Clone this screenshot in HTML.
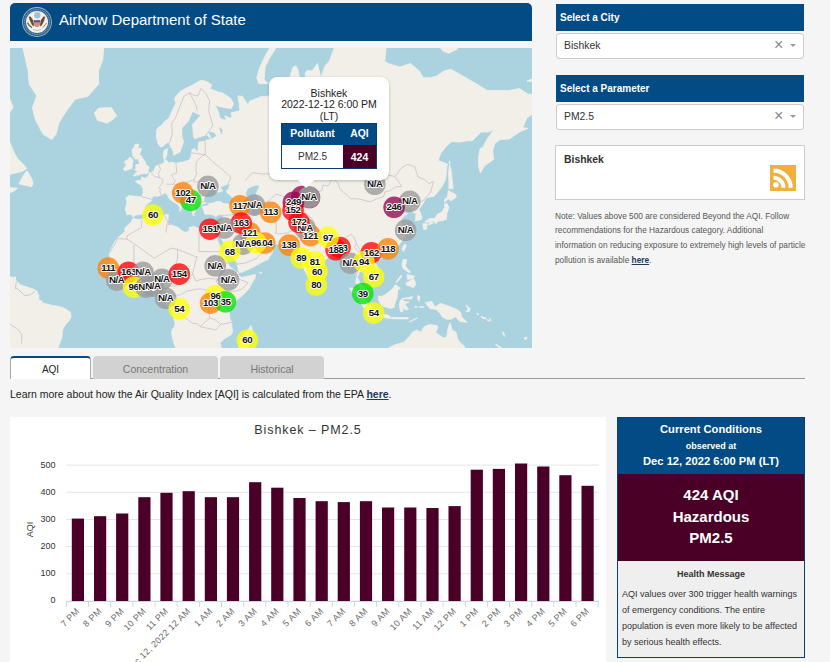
<!DOCTYPE html>
<html><head><meta charset="utf-8"><style>
*{box-sizing:border-box;margin:0;padding:0}
html,body{width:830px;height:662px;overflow:hidden;background:#f5f5f5;font-family:"Liberation Sans",sans-serif;color:#333}
.a{position:absolute}
.hdr{left:10px;top:3px;width:522px;height:38px;background:#034b85;border-radius:5px 5px 0 0}
.title{left:59px;top:10px;font-size:15px;color:#fff;line-height:19px;white-space:nowrap}
.sh{left:556px;width:248px;height:27px;background:#034b85;color:#fff;font-weight:700;font-size:10px;padding-left:4px;line-height:27px;white-space:nowrap}
.sel{left:556px;width:248px;height:26px;background:#fff;border:1px solid #ccc;border-radius:3px;font-size:10.4px;color:#333;padding-left:7px;line-height:24px}
.x{position:absolute;left:217px;top:-1px;font-size:16px;color:#888;line-height:23px}
.car{position:absolute;left:233px;top:10px;width:0;height:0;border-left:3.5px solid transparent;border-right:3.5px solid transparent;border-top:3.5px solid #999}
.box{left:555px;top:145px;width:250px;height:55px;background:#fff;border:1px solid #ccc}
.note{left:555px;top:208.7px;width:275px;white-space:nowrap;font-size:8.3px;color:#555;line-height:14.8px}
.note a,.learn a{color:#1a3b5d;font-weight:700;text-decoration:underline}
.tab{top:356px;height:23px;font-size:10.5px;text-align:center;line-height:26px;border-radius:4px 4px 0 0}
.learn{left:10px;top:387px;font-size:10.5px;color:#222;white-space:nowrap;line-height:14px}
.panel{left:617px;top:417px;width:188px;height:241px;border:1px solid #0b3d6e;background:#efefef}
</style></head><body>
<div class="a hdr"></div>
<svg class="a" style="left:22px;top:7px" width="30" height="30" viewBox="0 0 30 30">
<circle cx="15" cy="15" r="14.9" fill="#9fc0a8"/><circle cx="15" cy="15" r="14.1" fill="#2e5f94"/>
<circle cx="15" cy="15" r="12.4" fill="none" stroke="#8fb0c8" stroke-width="1.2" stroke-dasharray="1 0.8" opacity=".8"/>
<circle cx="15" cy="15" r="11" fill="#f3f1ec"/>
<circle cx="15.3" cy="8.2" r="3.2" fill="#a9bfd0"/>
<polygon points="6.7,9.8 8.5,9.5 11,13 12,17 11.8,19.6 10,18 8,14" fill="#6e4a26"/>
<polygon points="23.3,9.8 21.5,9.5 19,13 18,17 18.2,19.6 20,18 22,14" fill="#6e4a26"/>
<path d="M11.8 13.3 H18.2 V18 Q15 22.5 11.8 18 Z" fill="#d98a80"/><rect x="11.8" y="13.3" width="6.4" height="2" fill="#3a5a9a"/>
<path d="M5.5 15.6 Q7 19 10 20.7" stroke="#5a7d3c" stroke-width="1.4" fill="none"/>
<path d="M24.5 16 L21 20.5" stroke="#8a8a7a" stroke-width="1" fill="none"/>
<path d="M11 22.5 Q15 24.5 19 22.5" stroke="#c8c0b0" stroke-width="1" fill="none"/>
</svg>
<div class="a title">AirNow Department of State</div>

<svg class="a" style="left:0;top:0" width="532" height="348" viewBox="0 0 532 348">
<defs><clipPath id="mc"><rect x="10" y="48" width="522" height="300"/></clipPath></defs>
<g clip-path="url(#mc)">
<rect x="10" y="48" width="522" height="300" fill="#aad3df"/><polygon points="133.6,217.3 132.1,215.9 130.6,214.1 128.7,214.6 126.4,214.6 126.6,211.9 125.3,210.0 125.5,208.1 127.0,203.0 126.6,200.2 125.7,197.9 127.7,196.7 128.7,195.5 133.4,196.1 137.5,196.4 139.2,196.7 141.3,197.0 142.2,196.4 143.0,192.8 143.0,188.3 140.9,184.8 139.0,184.2 135.3,181.3 137.1,180.4 141.3,180.4 141.5,177.1 143.0,177.4 145.0,178.4 145.8,177.7 147.9,176.4 149.7,172.7 151.8,172.1 153.3,171.4 154.4,169.3 155.9,165.8 160.1,164.4 161.0,164.4 164.2,162.6 164.4,160.4 163.3,156.6 164.0,150.5 168.2,148.1 171.0,148.1 169.5,143.2 168.0,142.0 167.0,142.8 162.7,146.5 160.6,146.9 157.6,143.2 156.5,136.9 156.3,130.2 158.4,127.5 162.0,124.7 164.8,121.3 169.1,117.9 172.3,110.3 175.9,103.2 174.4,98.2 179.8,91.7 185.1,88.6 190.5,86.1 196.2,82.9 200.7,80.3 205.4,81.0 212.0,84.9 209.7,88.6 217.2,91.7 222.5,92.9 230.6,98.2 233.6,103.8 231.0,108.7 218.9,106.5 214.8,104.4 217.2,109.2 219.5,115.4 219.9,117.9 222.5,119.4 226.8,120.4 224.6,115.9 230.0,117.9 232.1,117.4 231.0,112.9 239.8,110.8 239.6,107.6 238.1,95.8 242.4,96.4 248.1,104.9 249.6,101.0 258.8,97.6 260.9,96.4 267.4,96.4 271.6,93.5 273.8,89.2 275.5,88.6 282.3,91.7 286.6,96.4 290.8,93.5 288.7,81.0 293.0,67.1 296.2,65.7 298.3,70.7 299.4,77.7 300.5,99.3 301.1,107.6 304.7,103.8 304.7,74.2 306.9,70.7 312.2,70.7 317.5,63.4 320.8,77.7 325.0,65.7 329.3,61.2 337.8,38.6 387.0,38.6 384.8,61.2 388.0,63.4 399.8,67.1 410.5,63.4 419.0,70.7 423.3,77.7 429.7,77.7 436.1,76.3 444.6,70.7 451.0,69.3 466.0,77.7 487.4,90.5 508.7,90.5 519.4,88.6 527.9,94.1 534.4,94.7 534.4,112.9 526.9,117.9 522.6,127.5 527.9,128.4 519.4,132.0 513.0,136.5 509.4,139.0 500.2,139.5 494.8,143.6 492.7,150.9 493.8,159.3 484.6,165.8 480.3,173.1 478.8,167.6 478.4,158.5 479.9,148.9 483.1,146.9 487.4,138.6 493.8,129.8 488.4,132.0 481.0,132.0 472.4,140.7 467.7,140.7 459.6,142.0 451.7,141.6 445.7,146.9 440.8,153.2 438.2,160.4 442.5,162.2 447.4,164.0 446.8,167.6 446.3,174.4 445.3,180.0 442.5,185.8 437.8,191.9 434.0,196.4 427.6,197.3 424.8,199.9 422.6,204.2 419.0,209.2 422.0,217.3 421.1,219.6 415.4,220.9 415.8,215.9 416.0,213.3 412.8,212.5 411.1,206.7 404.7,209.7 406.6,205.0 405.1,204.2 400.9,207.0 397.2,209.5 399.4,213.3 403.4,212.7 407.7,213.5 402.6,217.3 400.4,220.7 403.8,226.1 406.0,230.1 404.1,231.8 406.4,232.8 403.8,237.5 401.1,242.2 397.9,245.8 394.9,248.6 389.5,250.9 381.4,253.4 381.0,255.5 378.6,252.8 373.7,254.4 371.6,259.1 376.7,265.2 378.9,270.0 378.9,274.2 376.5,276.4 374.4,277.7 373.3,279.2 369.5,281.4 370.1,278.3 367.7,277.0 366.7,277.0 364.5,273.5 360.3,270.7 359.0,272.9 357.5,277.2 360.5,284.4 364.1,286.7 366.5,291.7 368.4,296.8 367.3,297.0 363.9,295.1 362.0,293.4 359.8,288.2 359.0,285.2 355.6,282.9 356.2,278.3 356.2,273.1 355.4,269.6 354.1,264.1 351.1,263.6 348.5,265.4 347.0,265.2 344.0,256.0 341.7,250.9 337.8,251.8 334.6,252.3 330.6,255.5 323.5,261.4 321.4,263.4 319.0,264.7 317.1,271.6 316.1,274.2 316.3,277.7 312.6,280.9 311.1,282.4 308.4,278.5 307.5,275.5 305.4,272.0 303.2,266.3 302.2,262.9 301.1,258.4 300.7,253.4 300.5,250.9 299.8,252.1 297.3,254.6 294.3,252.5 293.0,250.9 294.1,249.8 291.9,247.9 288.7,245.1 283.6,244.1 278.7,244.4 275.0,243.9 269.1,243.2 266.3,239.9 265.9,241.5 266.1,244.4 270.8,247.9 273.3,250.4 270.6,255.7 268.8,257.1 269.1,258.7 260.9,262.9 250.5,268.5 241.7,272.2 238.5,272.4 237.9,274.8 241.7,277.5 250.7,275.5 255.2,274.4 255.4,277.5 252.0,282.7 249.2,288.5 242.4,295.5 236.4,300.7 233.0,304.7 230.4,308.6 229.1,310.7 229.5,314.4 230.0,318.9 231.5,321.9 232.1,327.8 232.5,331.3 232.5,332.2 230.8,334.9 224.4,338.7 219.9,343.0 221.0,345.7 221.4,350.3 176.4,350.3 175.5,347.1 173.8,343.4 171.4,332.7 171.9,330.0 174.2,326.9 174.4,326.3 175.1,323.4 173.8,318.7 173.6,316.5 171.9,312.6 171.0,310.1 168.2,307.1 164.2,301.3 165.7,298.9 166.5,295.7 166.7,293.6 166.3,291.2 165.3,291.2 163.3,289.3 160.6,290.4 158.4,290.6 156.3,287.6 152.9,286.1 150.7,286.1 148.2,286.7 145.2,288.0 141.1,289.7 137.1,288.5 132.6,289.3 129.6,290.4 122.5,286.3 117.4,281.6 116.3,279.4 112.3,274.2 110.1,270.7 108.2,268.0 110.4,265.2 111.4,260.5 109.1,254.4 111.6,247.7 114.6,242.0 118.0,237.7 124.9,231.6 124.7,228.8 125.9,226.8 129.4,223.5 131.1,222.5 132.4,219.4 133.2,217.8" fill="#f2efe9" stroke="#f2efe9" stroke-width="0.8" stroke-linejoin="round"/><polygon points="148.6,172.4 148.6,171.4 147.5,171.0 148.4,169.6 149.3,167.6 148.4,166.0 146.2,166.1 145.8,163.6 145.4,161.8 144.3,160.4 142.6,158.5 141.3,155.5 139.2,154.7 141.1,150.5 141.3,148.1 137.1,148.9 139.0,145.3 138.3,144.1 134.9,144.5 134.3,147.3 132.1,149.3 132.4,153.2 133.4,157.4 135.1,156.3 134.7,158.9 138.1,158.9 139.2,162.2 139.2,164.4 136.0,164.7 135.6,166.5 136.6,168.3 134.3,169.6 137.1,170.7 138.8,171.0 139.4,171.4 136.6,172.1 133.4,175.8 134.5,176.1 136.8,174.8 137.9,175.4 140.3,174.1 142.8,173.7 145.4,173.4 146.2,173.7" fill="#f2efe9" stroke="#f2efe9" stroke-width="0.8" stroke-linejoin="round"/><polygon points="132.4,164.7 131.9,168.3 127.4,170.0 124.7,171.0 123.4,169.0 124.7,167.2 126.4,165.1 124.2,161.5 127.4,160.0 130.0,157.0 133.0,160.0" fill="#f2efe9" stroke="#f2efe9" stroke-width="0.8" stroke-linejoin="round"/><polygon points="97.5,120.4 94.3,112.9 98.6,108.1 111.4,107.6 114.6,112.9 116.8,115.4 113.6,118.9 107.2,123.3 100.7,121.3" fill="#f2efe9" stroke="#f2efe9" stroke-width="0.8" stroke-linejoin="round"/><polygon points="51.8,139.5 55.9,134.3 59.1,122.8 65.5,112.3 75.1,99.3 87.9,96.4 98.6,84.2 98.6,70.7 102.9,59.6 103.9,43.1 21.7,43.1 28.1,70.7 29.2,84.2 36.7,95.8 32.4,107.6 35.6,120.4 43.1,134.3" fill="#f2efe9" stroke="#f2efe9" stroke-width="0.8" stroke-linejoin="round"/><polygon points="-3.9,120.4 6.8,117.9 13.2,107.1 11.0,102.1 4.6,87.4 -3.9,74.2" fill="#f2efe9" stroke="#f2efe9" stroke-width="0.8" stroke-linejoin="round"/><polygon points="-3.9,138.6 7.8,137.3 14.2,152.8 17.4,158.5 23.8,164.7 26.6,168.6 21.7,171.7 4.6,175.4 -3.9,179.4" fill="#f2efe9" stroke="#f2efe9" stroke-width="0.8" stroke-linejoin="round"/><polygon points="27.1,170.7 32.0,179.4 33.0,184.2 31.3,186.7 27.1,185.8 18.9,183.9 23.8,174.4" fill="#f2efe9" stroke="#f2efe9" stroke-width="0.8" stroke-linejoin="round"/><polygon points="-3.9,188.9 11.0,187.6 17.4,188.3 14.2,191.0 4.6,195.5 -3.9,197.9" fill="#f2efe9" stroke="#f2efe9" stroke-width="0.8" stroke-linejoin="round"/><polygon points="258.8,83.6 256.7,77.7 259.9,67.1 265.2,55.7 273.8,41.3 280.2,41.3 269.5,58.1 265.2,67.1 264.1,79.7 268.4,83.6" fill="#f2efe9" stroke="#f2efe9" stroke-width="0.8" stroke-linejoin="round"/><polygon points="270.1,84.9 274.8,87.4 272.7,91.7 269.9,87.4" fill="#f2efe9" stroke="#f2efe9" stroke-width="0.8" stroke-linejoin="round"/><polygon points="437.2,43.1 442.5,50.8 448.9,53.3 457.5,49.1 457.5,43.1" fill="#f2efe9" stroke="#f2efe9" stroke-width="0.8" stroke-linejoin="round"/><polygon points="526.9,81.0 532.2,79.0 532.2,81.6" fill="#f2efe9" stroke="#f2efe9" stroke-width="0.8" stroke-linejoin="round"/><polygon points="448.9,161.5 451.0,169.3 452.1,179.4 453.2,188.6 448.9,188.9 448.9,181.0 448.5,172.7 450.0,161.1" fill="#f2efe9" stroke="#f2efe9" stroke-width="0.8" stroke-linejoin="round"/><polygon points="444.6,202.2 448.3,199.0 451.5,200.8 456.4,197.0 455.3,194.3 448.3,190.7 447.4,197.0 444.6,199.3" fill="#f2efe9" stroke="#f2efe9" stroke-width="0.8" stroke-linejoin="round"/><polygon points="446.8,203.0 448.9,207.8 446.8,213.3 446.6,217.3 446.3,219.6 444.2,219.9 442.1,220.7 438.2,220.9 437.8,221.7 435.7,223.8 434.0,220.9 429.7,221.5 425.4,222.5 425.4,221.2 429.7,218.6 435.0,218.3 437.8,213.8 441.4,212.5 444.6,207.8 444.6,204.2" fill="#f2efe9" stroke="#f2efe9" stroke-width="0.8" stroke-linejoin="round"/><polygon points="428.6,225.0 433.3,223.0 431.8,221.5 429.3,222.7" fill="#f2efe9" stroke="#f2efe9" stroke-width="0.8" stroke-linejoin="round"/><polygon points="422.9,223.8 427.3,223.8 426.5,229.1 423.7,229.6 423.1,226.3" fill="#f2efe9" stroke="#f2efe9" stroke-width="0.8" stroke-linejoin="round"/><polygon points="405.1,243.9 406.2,245.8 403.6,251.6 402.1,249.3 403.2,245.8" fill="#f2efe9" stroke="#f2efe9" stroke-width="0.8" stroke-linejoin="round"/><polygon points="377.6,257.8 381.6,256.0 382.7,257.1 379.5,260.2 377.8,259.6" fill="#f2efe9" stroke="#f2efe9" stroke-width="0.8" stroke-linejoin="round"/><polygon points="403.2,259.6 406.6,259.6 406.2,262.9 405.3,265.6 407.3,268.9 410.5,271.8 409.4,272.9 405.3,270.0 403.2,268.5 401.9,265.2 402.6,261.8" fill="#f2efe9" stroke="#f2efe9" stroke-width="0.8" stroke-linejoin="round"/><polygon points="406.2,282.7 413.7,278.8 415.8,283.7 413.5,287.8 410.5,286.3 406.2,285.0" fill="#f2efe9" stroke="#f2efe9" stroke-width="0.8" stroke-linejoin="round"/><polygon points="407.3,274.4 414.7,276.2 412.6,278.5 407.3,279.4" fill="#f2efe9" stroke="#f2efe9" stroke-width="0.8" stroke-linejoin="round"/><polygon points="395.9,282.0 401.1,275.3 401.7,276.6 396.6,282.7" fill="#f2efe9" stroke="#f2efe9" stroke-width="0.8" stroke-linejoin="round"/><polygon points="378.4,296.0 381.6,296.6 387.0,293.4 392.1,289.1 395.5,284.8 400.4,288.2 397.6,290.2 397.2,297.7 395.1,302.6 394.2,307.3 390.4,308.4 382.7,306.2 380.6,304.1 378.4,299.8" fill="#f2efe9" stroke="#f2efe9" stroke-width="0.8" stroke-linejoin="round"/><polygon points="349.2,287.8 353.9,288.7 359.8,294.5 367.1,301.9 372.0,306.2 371.6,312.2 368.8,312.4 364.1,308.4 360.1,301.9 356.4,296.2 351.9,291.7" fill="#f2efe9" stroke="#f2efe9" stroke-width="0.8" stroke-linejoin="round"/><polygon points="370.3,314.4 373.7,312.6 376.9,313.3 381.4,314.6 386.3,314.6 390.0,316.3 390.2,318.5 382.7,317.4 376.9,316.5 372.9,315.7" fill="#f2efe9" stroke="#f2efe9" stroke-width="0.8" stroke-linejoin="round"/><polygon points="391.2,317.4 399.8,317.6 408.3,317.6 408.3,318.9 399.8,318.9 391.2,318.7" fill="#f2efe9" stroke="#f2efe9" stroke-width="0.8" stroke-linejoin="round"/><polygon points="409.4,321.9 417.5,317.8 412.6,320.2" fill="#f2efe9" stroke="#f2efe9" stroke-width="0.8" stroke-linejoin="round"/><polygon points="400.6,311.6 402.8,311.8 403.0,305.6 405.1,310.1 408.3,309.4 404.7,303.9 409.2,301.9 404.1,301.7 402.6,298.7 412.6,296.6 411.5,298.9 401.9,298.7 399.8,301.5 399.4,306.2" fill="#f2efe9" stroke="#f2efe9" stroke-width="0.8" stroke-linejoin="round"/><polygon points="417.9,295.5 420.1,296.6 419.0,301.5 417.5,298.7" fill="#f2efe9" stroke="#f2efe9" stroke-width="0.8" stroke-linejoin="round"/><polygon points="414.7,306.6 417.3,306.4 416.4,307.9" fill="#f2efe9" stroke="#f2efe9" stroke-width="0.8" stroke-linejoin="round"/><polygon points="419.0,306.9 424.3,306.6 422.2,307.7" fill="#f2efe9" stroke="#f2efe9" stroke-width="0.8" stroke-linejoin="round"/><polygon points="425.4,302.6 431.8,301.5 435.0,306.9 440.4,303.4 446.8,305.4 457.0,309.4 460.7,312.6 461.7,316.9 467.1,322.4 459.6,321.3 455.3,316.5 451.7,319.1 446.8,319.3 442.5,317.2 440.4,313.7 436.1,309.4 429.7,308.4 427.6,305.8" fill="#f2efe9" stroke="#f2efe9" stroke-width="0.8" stroke-linejoin="round"/><polygon points="466.0,305.1 470.3,308.4 469.2,311.6 466.0,311.6 468.1,309.4" fill="#f2efe9" stroke="#f2efe9" stroke-width="0.8" stroke-linejoin="round"/><polygon points="450.0,322.8 452.1,330.0 456.0,332.2 457.5,338.9 459.6,342.1 463.9,345.7 466.0,350.3 387.0,350.3 389.1,347.5 394.9,344.8 404.1,342.3 406.6,338.9 409.4,336.7 412.6,332.2 416.9,330.0 421.1,332.2 423.3,327.8 425.4,326.1 429.7,324.5 437.2,325.6 437.8,327.8 435.7,332.2 438.2,334.4 443.6,337.8 446.8,336.7 448.1,327.8" fill="#f2efe9" stroke="#f2efe9" stroke-width="0.8" stroke-linejoin="round"/><polygon points="476.7,313.3 478.8,314.4 477.7,314.8" fill="#f2efe9" stroke="#f2efe9" stroke-width="0.8" stroke-linejoin="round"/><polygon points="481.0,316.5 486.3,318.0 485.2,318.9 481.0,317.6" fill="#f2efe9" stroke="#f2efe9" stroke-width="0.8" stroke-linejoin="round"/><polygon points="486.9,319.5 489.5,320.8 488.4,321.3" fill="#f2efe9" stroke="#f2efe9" stroke-width="0.8" stroke-linejoin="round"/><polygon points="489.5,318.0 491.2,320.6 490.6,320.8" fill="#f2efe9" stroke="#f2efe9" stroke-width="0.8" stroke-linejoin="round"/><polygon points="502.3,331.8 503.4,332.2 504.9,336.2 504.0,336.0" fill="#f2efe9" stroke="#f2efe9" stroke-width="0.8" stroke-linejoin="round"/><polygon points="495.9,343.9 502.5,348.7 501.2,349.4 495.7,344.8" fill="#f2efe9" stroke="#f2efe9" stroke-width="0.8" stroke-linejoin="round"/><polygon points="524.3,337.6 527.1,337.1 526.2,339.4 524.5,338.9" fill="#f2efe9" stroke="#f2efe9" stroke-width="0.8" stroke-linejoin="round"/><polygon points="316.3,279.2 318.6,281.4 320.5,284.2 319.7,286.5 317.1,287.0 316.1,283.7" fill="#f2efe9" stroke="#f2efe9" stroke-width="0.8" stroke-linejoin="round"/><polygon points="250.9,325.6 253.3,333.3 251.3,337.8 249.2,344.6 247.7,350.3 238.7,350.3 239.6,343.4 240.2,336.7 244.5,334.0 247.9,330.0" fill="#f2efe9" stroke="#f2efe9" stroke-width="0.8" stroke-linejoin="round"/><polygon points="172.1,211.6 177.9,211.1 178.9,211.4 177.9,213.3 177.9,215.4 172.1,212.5" fill="#f2efe9" stroke="#f2efe9" stroke-width="0.8" stroke-linejoin="round"/><polygon points="163.5,203.6 166.5,203.6 166.1,208.6 164.0,209.5 163.5,206.4" fill="#f2efe9" stroke="#f2efe9" stroke-width="0.8" stroke-linejoin="round"/><polygon points="165.7,197.9 165.9,200.8 165.3,202.5 164.0,200.8" fill="#f2efe9" stroke="#f2efe9" stroke-width="0.8" stroke-linejoin="round"/><polygon points="195.8,218.3 201.8,219.1 201.1,219.9 195.8,219.1" fill="#f2efe9" stroke="#f2efe9" stroke-width="0.8" stroke-linejoin="round"/><polygon points="214.6,219.9 219.5,218.3 218.2,220.9 214.6,220.7" fill="#f2efe9" stroke="#f2efe9" stroke-width="0.8" stroke-linejoin="round"/><polygon points="259.4,272.7 262.0,272.7 260.9,273.3" fill="#f2efe9" stroke="#f2efe9" stroke-width="0.8" stroke-linejoin="round"/><polygon points="-3.9,275.1 10.0,276.8 15.3,277.7 16.4,281.4 21.3,285.2 27.7,287.2 33.9,289.3 36.7,290.8 38.8,295.5 38.8,299.8 42.0,300.9 42.0,302.8 51.0,305.1 57.0,306.0 63.4,307.7 70.4,312.2 71.1,316.9 69.3,320.6 66.6,323.4 63.4,327.8 62.3,331.8 61.9,337.8 59.5,344.1 58.0,348.0 55.9,350.3 -3.9,350.3" fill="#f2efe9" stroke="#f2efe9" stroke-width="0.8" stroke-linejoin="round"/><polygon points="13.4,278.1 15.5,276.6 15.3,278.1" fill="#f2efe9" stroke="#f2efe9" stroke-width="0.8" stroke-linejoin="round"/><polygon points="133.4,217.5 136.2,215.4 140.5,215.1 140.9,215.4 143.5,213.0 144.5,211.1 146.0,210.0 145.0,207.8 147.5,204.5 150.3,202.5 152.6,199.9 152.2,198.4 153.9,196.4 157.1,197.0 161.2,195.8 164.6,193.7 166.5,194.6 167.6,196.4 168.0,198.2 171.9,201.6 174.6,203.0 176.1,204.2 177.2,204.7 179.3,207.8 178.9,211.6 180.0,212.2 182.1,208.9 182.3,205.0 184.9,207.0 185.1,206.1 184.0,204.7 181.7,203.3 180.2,201.0 174.4,196.1 172.5,194.6 171.9,190.7 175.1,190.1 176.4,191.0 178.1,194.6 180.6,196.4 184.3,199.0 187.0,202.8 187.3,205.0 188.1,207.5 192.0,211.4 192.0,215.1 193.7,216.2 195.2,216.2 194.3,213.3 196.2,212.2 194.5,204.7 196.7,206.4 197.7,203.9 200.9,204.2 202.2,205.9 201.6,207.8 203.3,210.8 204.1,214.6 206.0,215.1 211.2,214.9 214.0,215.9 215.7,217.3 219.5,215.1 222.9,215.7 222.1,218.6 221.4,222.7 220.4,225.6 219.9,227.3 219.1,228.8 214.6,229.3 209.5,229.6 207.3,230.6 196.9,227.3 193.9,225.6 188.3,227.3 188.7,230.6 185.1,231.8 181.1,229.6 177.9,226.6 173.8,225.3 168.9,223.0 167.2,222.7 168.7,220.7 169.1,214.3 166.7,213.8 162.3,214.9 152.0,215.1 144.3,218.1 139.2,219.1 133.2,217.8" fill="#aad3df" stroke="#aad3df" stroke-width="0.5" stroke-linejoin="round"/><polygon points="207.8,203.0 205.4,201.9 204.3,199.3 205.2,197.3 206.7,194.3 209.0,191.3 211.2,187.3 213.3,187.0 215.0,190.7 217.2,193.1 220.4,192.5 223.6,191.0 221.0,187.6 225.7,185.5 229.3,184.8 227.8,188.9 225.7,190.7 226.3,192.8 230.4,196.1 234.5,201.9 230.4,203.6 223.1,202.8 220.6,200.8 216.1,201.0 213.5,202.2" fill="#aad3df" stroke="#aad3df" stroke-width="0.5" stroke-linejoin="round"/><polygon points="202.2,205.6 204.3,203.9 207.8,203.6 208.6,204.5 205.4,205.6" fill="#aad3df" stroke="#aad3df" stroke-width="0.5" stroke-linejoin="round"/><polygon points="248.1,188.9 251.3,187.3 256.5,185.5 258.8,186.4 255.6,193.4 258.4,200.8 258.8,206.4 260.7,212.5 254.5,215.4 250.3,213.3 252.4,205.3 248.8,200.8 247.1,197.9 246.0,193.4" fill="#aad3df" stroke="#aad3df" stroke-width="0.5" stroke-linejoin="round"/><polygon points="215.0,232.6 216.1,236.2 218.7,238.2 220.4,233.8 219.9,237.5 223.6,243.4 229.3,252.8 236.4,263.2 237.9,271.1 238.5,272.4 236.8,271.8 230.0,266.1 225.1,257.1 221.4,248.1 217.8,239.4" fill="#aad3df" stroke="#aad3df" stroke-width="0.5" stroke-linejoin="round"/><polygon points="266.3,239.9 265.9,239.4 260.9,240.8 254.1,235.3 248.1,232.8 248.1,234.3 252.6,241.3 255.8,242.7 255.6,243.9 261.8,245.8 263.7,243.9 265.9,241.5" fill="#aad3df" stroke="#aad3df" stroke-width="0.5" stroke-linejoin="round"/><polygon points="168.2,148.1 167.6,154.0 166.1,158.9 167.4,160.7 168.9,162.2 171.4,161.5 176.1,162.6 185.5,160.7 189.4,158.9 190.7,155.9 190.5,152.8 191.7,149.3 194.7,147.7 197.1,150.9 197.7,145.3 198.4,141.1 210.1,139.0 206.9,135.6 199.0,137.7 194.7,139.5 193.0,136.9 191.7,124.7 199.9,115.4 192.8,112.3 189.0,121.3 182.6,128.0 182.3,135.6 184.3,141.6 180.6,152.1 173.4,156.3 172.7,154.7 172.9,152.1 171.0,148.1" fill="#aad3df" stroke="#aad3df" stroke-width="0.5" stroke-linejoin="round"/><polygon points="299.4,77.7 300.5,99.3 301.5,107.6 304.7,103.8 304.7,74.2" fill="#aad3df" stroke="#aad3df" stroke-width="0.5" stroke-linejoin="round"/><polygon points="367.7,171.0 372.0,167.6 379.5,155.9 377.4,156.6 369.9,169.3" fill="#aad3df" stroke="#aad3df" stroke-width="0.5" stroke-linejoin="round"/><polygon points="303.7,187.3 310.1,186.4 314.3,188.3 307.9,190.4" fill="#aad3df" stroke="#aad3df" stroke-width="0.5" stroke-linejoin="round"/><polygon points="208.6,132.0 214.0,132.9 216.1,135.6 211.8,138.6" fill="#aad3df" stroke="#aad3df" stroke-width="0.5" stroke-linejoin="round"/><polygon points="219.3,127.5 222.5,129.8 221.4,134.3" fill="#aad3df" stroke="#aad3df" stroke-width="0.5" stroke-linejoin="round"/><polyline points="333.1,178.7 337.8,182.9 340.0,188.9 343.2,191.9 350.7,198.7 359.2,199.0 369.9,201.9 374.2,199.9 383.8,196.4 384.8,191.9 390.2,190.7 395.5,186.7 401.3,186.7 400.9,185.1" fill="none" stroke="#c9b8c6" stroke-width="0.7" stroke-linejoin="round"/><polyline points="333.1,178.7 342.1,173.7 354.9,169.3 363.5,171.4 372.0,175.1 376.3,178.4 389.1,175.4 394.9,176.4 400.9,185.1" fill="none" stroke="#c9b8c6" stroke-width="0.7" stroke-linejoin="round"/><polyline points="394.9,176.4 401.9,167.6 407.3,164.4 414.7,166.5 417.9,176.8 424.8,179.7 428.6,183.6 433.3,181.6 430.8,191.9 425.4,198.2 424.6,199.6" fill="none" stroke="#c9b8c6" stroke-width="0.7" stroke-linejoin="round"/><polyline points="424.6,199.6 419.0,202.5 414.7,205.3 411.1,206.7" fill="none" stroke="#c9b8c6" stroke-width="0.7" stroke-linejoin="round"/><polyline points="244.9,181.0 252.4,172.7 263.1,174.1 275.9,173.4 277.0,162.9 293.0,157.0 302.6,162.2 310.1,164.0 316.5,173.4 324.0,172.7 332.1,179.1" fill="none" stroke="#c9b8c6" stroke-width="0.7" stroke-linejoin="round"/><polyline points="332.1,179.1 328.2,185.8 322.9,185.1 321.8,190.7 316.5,191.9 316.9,200.5 307.9,205.0 302.8,207.8 305.6,213.8" fill="none" stroke="#c9b8c6" stroke-width="0.7" stroke-linejoin="round"/><polyline points="305.6,213.8 312.2,218.6 315.4,226.3 318.6,232.1 327.2,237.0 334.0,237.7 342.1,240.1 350.7,234.3 353.9,237.0 356.2,243.4 354.5,247.2 358.1,251.4 363.0,253.4 365.6,250.4 373.1,250.2 376.3,252.8" fill="none" stroke="#c9b8c6" stroke-width="0.7" stroke-linejoin="round"/><polyline points="258.8,200.8 265.2,202.8 269.5,199.9 275.9,194.0 284.4,196.7 290.8,203.6 297.3,198.7 303.7,197.3 316.9,200.5" fill="none" stroke="#c9b8c6" stroke-width="0.7" stroke-linejoin="round"/><polyline points="260.9,213.3 267.4,211.9 275.9,215.7 276.3,229.1 275.7,233.1 279.1,234.0 287.6,232.8 293.6,229.6 297.3,222.5 298.3,215.9 305.6,213.8" fill="none" stroke="#c9b8c6" stroke-width="0.7" stroke-linejoin="round"/><polyline points="303.7,221.2 304.7,226.3 304.9,230.1 298.3,237.5 295.1,239.9 294.1,246.3 291.3,247.7" fill="none" stroke="#c9b8c6" stroke-width="0.7" stroke-linejoin="round"/><polyline points="228.5,224.0 236.4,229.6 244.9,234.8 247.5,236.2" fill="none" stroke="#c9b8c6" stroke-width="0.7" stroke-linejoin="round"/><polyline points="237.0,264.1 246.0,262.9 256.7,258.4 264.1,249.8 263.1,246.5" fill="none" stroke="#c9b8c6" stroke-width="0.7" stroke-linejoin="round"/><polyline points="222.9,215.7 224.6,215.4 236.0,214.3 241.3,214.1 242.8,217.8 243.9,225.0 247.1,227.6 248.1,232.6" fill="none" stroke="#c9b8c6" stroke-width="0.7" stroke-linejoin="round"/><polyline points="234.5,201.9 238.5,203.3 241.3,207.8 248.1,210.6" fill="none" stroke="#c9b8c6" stroke-width="0.7" stroke-linejoin="round"/><polyline points="220.4,233.8 228.5,224.0 236.0,214.3" fill="none" stroke="#c9b8c6" stroke-width="0.7" stroke-linejoin="round"/><polyline points="199.0,228.3 199.0,251.6 224.6,251.6" fill="none" stroke="#c9b8c6" stroke-width="0.7" stroke-linejoin="round"/><polyline points="196.9,256.2 196.9,257.3 177.6,249.3 171.2,248.1 154.1,258.2 148.2,253.9 135.3,244.6 127.0,239.1 127.0,235.8 141.3,227.6 142.0,219.9" fill="none" stroke="#c9b8c6" stroke-width="0.7" stroke-linejoin="round"/><polyline points="133.9,244.8 133.9,266.3 120.0,267.8 110.4,265.2" fill="none" stroke="#c9b8c6" stroke-width="0.7" stroke-linejoin="round"/><polyline points="127.0,239.1 117.8,238.7 109.3,253.2" fill="none" stroke="#c9b8c6" stroke-width="0.7" stroke-linejoin="round"/><polyline points="165.9,232.6 167.0,223.8 170.2,225.0 163.8,214.9" fill="none" stroke="#c9b8c6" stroke-width="0.7" stroke-linejoin="round"/><polyline points="196.9,256.2 192.6,274.0 195.8,281.1 201.1,279.4 209.7,278.3 218.2,279.4 216.1,281.6 221.4,288.5 231.0,291.2 235.3,291.2 241.7,289.1 248.1,282.7 239.6,279.4 237.4,276.2" fill="none" stroke="#c9b8c6" stroke-width="0.7" stroke-linejoin="round"/><polyline points="216.1,281.6 218.9,277.0 223.6,268.9 227.8,260.7" fill="none" stroke="#c9b8c6" stroke-width="0.7" stroke-linejoin="round"/><polyline points="153.3,274.6 162.7,271.8 174.4,270.0 177.6,258.4 177.6,249.3" fill="none" stroke="#c9b8c6" stroke-width="0.7" stroke-linejoin="round"/><polyline points="174.4,270.0 178.7,278.3 175.5,285.9 179.8,283.7 186.2,280.5 192.6,274.0" fill="none" stroke="#c9b8c6" stroke-width="0.7" stroke-linejoin="round"/><polyline points="171.2,310.5 179.8,312.4 184.0,316.9 192.6,323.4 196.9,323.4 200.1,326.7 209.7,318.0 208.6,309.4 209.7,301.9 209.0,295.5 211.8,291.9 203.3,289.1 196.9,289.1 186.2,291.2 185.1,292.3 179.8,295.1 175.5,295.1 169.7,295.1" fill="none" stroke="#c9b8c6" stroke-width="0.7" stroke-linejoin="round"/><polyline points="229.3,309.9 218.0,301.9 210.7,301.9" fill="none" stroke="#c9b8c6" stroke-width="0.7" stroke-linejoin="round"/><polyline points="220.4,324.5 232.1,322.4" fill="none" stroke="#c9b8c6" stroke-width="0.7" stroke-linejoin="round"/><polyline points="200.1,326.7 216.1,330.0 220.4,324.5 216.1,320.2 209.7,318.0" fill="none" stroke="#c9b8c6" stroke-width="0.7" stroke-linejoin="round"/><polyline points="116.3,279.4 122.1,278.3 128.5,277.2 133.9,277.5 139.6,279.4 145.6,276.2 153.3,274.6" fill="none" stroke="#c9b8c6" stroke-width="0.7" stroke-linejoin="round"/><polyline points="122.5,286.3 128.5,283.7 129.6,290.4" fill="none" stroke="#c9b8c6" stroke-width="0.7" stroke-linejoin="round"/><polyline points="139.6,279.4 139.2,288.9" fill="none" stroke="#c9b8c6" stroke-width="0.7" stroke-linejoin="round"/><polyline points="145.6,276.2 148.2,286.7" fill="none" stroke="#c9b8c6" stroke-width="0.7" stroke-linejoin="round"/><polyline points="151.6,274.0 151.4,286.1" fill="none" stroke="#c9b8c6" stroke-width="0.7" stroke-linejoin="round"/><polyline points="163.8,290.0 171.2,285.9 175.5,285.9" fill="none" stroke="#c9b8c6" stroke-width="0.7" stroke-linejoin="round"/><polyline points="141.8,196.7 152.4,199.6" fill="none" stroke="#c9b8c6" stroke-width="0.7" stroke-linejoin="round"/><polyline points="150.9,172.4 154.6,176.4 159.3,177.7 163.1,179.4 161.8,183.9 158.4,187.9 160.6,189.2 159.7,191.6 161.6,195.5" fill="none" stroke="#c9b8c6" stroke-width="0.7" stroke-linejoin="round"/><polyline points="158.4,164.0 160.6,169.3 158.4,173.4 159.3,177.7" fill="none" stroke="#c9b8c6" stroke-width="0.7" stroke-linejoin="round"/><polyline points="166.1,184.2 173.4,184.2 175.1,180.7 171.4,175.1 176.8,172.7 175.9,162.6" fill="none" stroke="#c9b8c6" stroke-width="0.7" stroke-linejoin="round"/><polyline points="164.8,159.3 166.1,158.9" fill="none" stroke="#c9b8c6" stroke-width="0.7" stroke-linejoin="round"/><polyline points="196.4,161.5 195.8,170.7 196.9,173.4 194.3,179.4 193.7,182.0 202.4,182.0 205.8,190.4" fill="none" stroke="#c9b8c6" stroke-width="0.7" stroke-linejoin="round"/><polyline points="181.7,180.7 186.2,182.6 194.3,179.4" fill="none" stroke="#c9b8c6" stroke-width="0.7" stroke-linejoin="round"/><polyline points="173.4,184.2 180.8,187.3 188.3,188.9 193.7,193.4 194.7,195.5 206.5,195.8" fill="none" stroke="#c9b8c6" stroke-width="0.7" stroke-linejoin="round"/><polyline points="193.7,193.4 192.6,202.8 201.1,202.8 205.4,200.8" fill="none" stroke="#c9b8c6" stroke-width="0.7" stroke-linejoin="round"/><polyline points="187.3,200.8 190.5,204.2 189.0,207.5" fill="none" stroke="#c9b8c6" stroke-width="0.7" stroke-linejoin="round"/><polyline points="205.0,140.3 205.4,154.7 214.0,162.9 221.4,168.6 231.0,177.4 227.2,185.5" fill="none" stroke="#c9b8c6" stroke-width="0.7" stroke-linejoin="round"/><polyline points="205.4,154.7 202.2,155.9 196.4,161.5" fill="none" stroke="#c9b8c6" stroke-width="0.7" stroke-linejoin="round"/><polyline points="190.5,152.8 205.4,154.7" fill="none" stroke="#c9b8c6" stroke-width="0.7" stroke-linejoin="round"/><polyline points="198.4,141.1 205.0,140.3" fill="none" stroke="#c9b8c6" stroke-width="0.7" stroke-linejoin="round"/><polyline points="205.8,93.5 209.7,101.0 208.6,110.3 212.9,125.6 205.0,136.5" fill="none" stroke="#c9b8c6" stroke-width="0.7" stroke-linejoin="round"/><polyline points="169.5,142.8 172.3,134.3 171.7,122.8 175.5,117.9 178.7,109.2 184.0,96.4 189.4,92.9 193.7,95.3 197.9,95.8 201.1,88.6 205.8,93.5" fill="none" stroke="#c9b8c6" stroke-width="0.7" stroke-linejoin="round"/><polyline points="197.3,111.3 196.0,104.9 189.4,92.9" fill="none" stroke="#c9b8c6" stroke-width="0.7" stroke-linejoin="round"/><polyline points="356.2,243.4 361.8,253.0 359.2,255.3 356.0,260.7 355.6,265.2 357.5,269.6 356.0,277.7" fill="none" stroke="#c9b8c6" stroke-width="0.7" stroke-linejoin="round"/><polyline points="363.7,250.7 367.7,255.0 369.9,260.7 375.2,267.4 374.2,273.3 373.1,277.2" fill="none" stroke="#c9b8c6" stroke-width="0.7" stroke-linejoin="round"/><polyline points="364.5,273.5 365.6,268.9 370.9,268.9 372.0,269.8" fill="none" stroke="#c9b8c6" stroke-width="0.7" stroke-linejoin="round"/><polyline points="361.8,253.0 363.5,257.3 361.3,261.8 364.5,260.9 369.5,264.3 370.9,268.9" fill="none" stroke="#c9b8c6" stroke-width="0.7" stroke-linejoin="round"/><polyline points="334.0,237.7 333.8,241.1 337.4,242.7 342.1,244.6 343.2,253.4" fill="none" stroke="#c9b8c6" stroke-width="0.7" stroke-linejoin="round"/><polyline points="316.5,231.3 318.6,236.2 325.0,239.1 333.8,241.1" fill="none" stroke="#c9b8c6" stroke-width="0.7" stroke-linejoin="round"/><polyline points="17.4,288.7 24.9,295.7 30.3,294.9 35.6,290.6" fill="none" stroke="#c9b8c6" stroke-width="0.7" stroke-linejoin="round"/><polyline points="16.4,281.4 15.3,288.7 17.4,288.7" fill="none" stroke="#c9b8c6" stroke-width="0.7" stroke-linejoin="round"/><polyline points="-3.9,291.2 2.5,296.6 10.0,296.6" fill="none" stroke="#c9b8c6" stroke-width="0.7" stroke-linejoin="round"/><polyline points="-3.9,321.3 6.8,322.4 17.4,328.9 21.7,334.4 21.7,343.4" fill="none" stroke="#c9b8c6" stroke-width="0.7" stroke-linejoin="round"/><circle cx="207.9" cy="186.3" r="10.8" fill="#999999" fill-opacity="0.76"/><circle cx="190.7" cy="200.3" r="10.8" fill="#00e400" fill-opacity="0.76"/><circle cx="182.7" cy="192.8" r="10.8" fill="#ff7e00" fill-opacity="0.76"/><circle cx="152.9" cy="215" r="10.8" fill="#ffff00" fill-opacity="0.76"/><circle cx="254.5" cy="205.1" r="10.8" fill="#999999" fill-opacity="0.76"/><circle cx="240" cy="205.7" r="10.8" fill="#ff7e00" fill-opacity="0.76"/><circle cx="270.7" cy="212.3" r="10.8" fill="#ff7e00" fill-opacity="0.76"/><circle cx="249.8" cy="232.8" r="10.8" fill="#ff7e00" fill-opacity="0.76"/><circle cx="241.2" cy="223.1" r="10.8" fill="#ff0000" fill-opacity="0.76"/><circle cx="224.3" cy="228" r="10.8" fill="#999999" fill-opacity="0.76"/><circle cx="209.9" cy="229.2" r="10.8" fill="#ff0000" fill-opacity="0.76"/><circle cx="264.7" cy="243" r="10.8" fill="#ff7e00" fill-opacity="0.76"/><circle cx="243" cy="244.2" r="10.8" fill="#999999" fill-opacity="0.76"/><circle cx="256" cy="242.8" r="10.8" fill="#ffff00" fill-opacity="0.76"/><circle cx="229.8" cy="251.4" r="10.8" fill="#ffff00" fill-opacity="0.76"/><circle cx="302" cy="196.5" r="10.8" fill="#99004c" fill-opacity="0.76"/><circle cx="309.5" cy="197.5" r="10.8" fill="#99004c" fill-opacity="0.76"/><circle cx="309.2" cy="197.2" r="10.8" fill="#999999" fill-opacity="0.76"/><circle cx="309" cy="196.8" r="10.8" fill="#999999" fill-opacity="0.76"/><circle cx="293.4" cy="202.3" r="10.8" fill="#99004c" fill-opacity="0.76"/><circle cx="293" cy="210.3" r="10.8" fill="#ff0000" fill-opacity="0.76"/><circle cx="310.4" cy="235.6" r="10.8" fill="#ff7e00" fill-opacity="0.76"/><circle cx="305" cy="228.3" r="10.8" fill="#999999" fill-opacity="0.76"/><circle cx="299" cy="222.3" r="10.8" fill="#ff0000" fill-opacity="0.76"/><circle cx="289.1" cy="245.1" r="10.8" fill="#ff7e00" fill-opacity="0.76"/><circle cx="340" cy="247.5" r="10.8" fill="#ff0000" fill-opacity="0.76"/><circle cx="336" cy="249.8" r="10.8" fill="#ff0000" fill-opacity="0.76"/><circle cx="328" cy="237.4" r="10.8" fill="#ffff00" fill-opacity="0.76"/><circle cx="301.2" cy="258" r="10.8" fill="#ffff00" fill-opacity="0.76"/><circle cx="314.8" cy="261.7" r="10.8" fill="#ffff00" fill-opacity="0.76"/><circle cx="317" cy="271.6" r="10.8" fill="#ffff00" fill-opacity="0.76"/><circle cx="316.3" cy="285.2" r="10.8" fill="#ffff00" fill-opacity="0.76"/><circle cx="350.3" cy="263.2" r="10.8" fill="#999999" fill-opacity="0.76"/><circle cx="371.4" cy="252.7" r="10.8" fill="#ff0000" fill-opacity="0.76"/><circle cx="388" cy="248.9" r="10.8" fill="#ff7e00" fill-opacity="0.76"/><circle cx="363.9" cy="261.7" r="10.8" fill="#ffff00" fill-opacity="0.76"/><circle cx="373.7" cy="276.8" r="10.8" fill="#ffff00" fill-opacity="0.76"/><circle cx="362.8" cy="293.5" r="10.8" fill="#00e400" fill-opacity="0.76"/><circle cx="373.7" cy="313.1" r="10.8" fill="#ffff00" fill-opacity="0.76"/><circle cx="374.8" cy="184.3" r="10.8" fill="#999999" fill-opacity="0.76"/><circle cx="409.8" cy="201.3" r="10.8" fill="#999999" fill-opacity="0.76"/><circle cx="394.1" cy="207.3" r="10.8" fill="#99004c" fill-opacity="0.76"/><circle cx="405.6" cy="230.3" r="10.8" fill="#999999" fill-opacity="0.76"/><circle cx="108.3" cy="268.1" r="10.8" fill="#ff7e00" fill-opacity="0.76"/><circle cx="116.7" cy="280.1" r="10.8" fill="#999999" fill-opacity="0.76"/><circle cx="128.5" cy="272.2" r="10.8" fill="#ff0000" fill-opacity="0.76"/><circle cx="143" cy="272.3" r="10.8" fill="#999999" fill-opacity="0.76"/><circle cx="133.6" cy="287.2" r="10.8" fill="#ffff00" fill-opacity="0.76"/><circle cx="146" cy="287.2" r="10.8" fill="#999999" fill-opacity="0.76"/><circle cx="152.9" cy="286.2" r="10.8" fill="#999999" fill-opacity="0.76"/><circle cx="161.9" cy="279.3" r="10.8" fill="#999999" fill-opacity="0.76"/><circle cx="179.3" cy="274.1" r="10.8" fill="#ff0000" fill-opacity="0.76"/><circle cx="165.7" cy="298.3" r="10.8" fill="#999999" fill-opacity="0.76"/><circle cx="179.3" cy="308.9" r="10.8" fill="#ffff00" fill-opacity="0.76"/><circle cx="215.2" cy="265.8" r="10.8" fill="#999999" fill-opacity="0.76"/><circle cx="228.5" cy="279.9" r="10.8" fill="#999999" fill-opacity="0.76"/><circle cx="215.4" cy="295.8" r="10.8" fill="#ffff00" fill-opacity="0.76"/><circle cx="210.6" cy="303.2" r="10.8" fill="#ff7e00" fill-opacity="0.76"/><circle cx="225.4" cy="301.8" r="10.8" fill="#00e400" fill-opacity="0.76"/><circle cx="247.3" cy="340.2" r="10.8" fill="#ffff00" fill-opacity="0.76"/><g font-family="Liberation Sans" font-weight="700" font-size="9.7" letter-spacing="-0.4" text-anchor="middle" fill="#111" stroke="#fff" stroke-width="1.8" paint-order="stroke" stroke-linejoin="round"><text x="207.9" y="189.4">N/A</text><text x="190.7" y="203.4">47</text><text x="182.7" y="195.9">102</text><text x="152.9" y="218.1">60</text><text x="254.5" y="208.2">N/A</text><text x="240" y="208.79999999999998">117</text><text x="270.7" y="215.4">113</text><text x="249.8" y="235.9">121</text><text x="241.2" y="226.2">163</text><text x="224.3" y="231.1">N/A</text><text x="209.9" y="232.29999999999998">151</text><text x="264.7" y="246.1">104</text><text x="243" y="247.29999999999998">N/A</text><text x="256" y="245.9">96</text><text x="229.8" y="254.5">68</text><text x="302" y="199.6">4</text><text x="309.5" y="200.6"></text><text x="309.2" y="200.29999999999998"></text><text x="309" y="199.9">N/A</text><text x="293.4" y="205.4">249</text><text x="293" y="213.4">152</text><text x="310.4" y="238.7">121</text><text x="305" y="231.4">N/A</text><text x="299" y="225.4">172</text><text x="289.1" y="248.2">138</text><text x="340" y="250.6">183</text><text x="336" y="252.9">188</text><text x="328" y="240.5">97</text><text x="301.2" y="261.1">89</text><text x="314.8" y="264.8">81</text><text x="317" y="274.70000000000005">60</text><text x="316.3" y="288.3">80</text><text x="350.3" y="266.3">N/A</text><text x="371.4" y="255.79999999999998">162</text><text x="388" y="252.0">118</text><text x="363.9" y="264.8">94</text><text x="373.7" y="279.90000000000003">67</text><text x="362.8" y="296.6">39</text><text x="373.7" y="316.20000000000005">54</text><text x="374.8" y="187.4">N/A</text><text x="409.8" y="204.4">N/A</text><text x="394.1" y="210.4">246</text><text x="405.6" y="233.4">N/A</text><text x="108.3" y="271.20000000000005">111</text><text x="116.7" y="283.20000000000005">N/A</text><text x="128.5" y="275.3">163</text><text x="143" y="275.40000000000003">N/A</text><text x="133.6" y="290.3">96</text><text x="146" y="290.3">N/A</text><text x="152.9" y="289.3">N/A</text><text x="161.9" y="282.40000000000003">N/A</text><text x="179.3" y="277.20000000000005">154</text><text x="165.7" y="301.40000000000003">N/A</text><text x="179.3" y="312.0">54</text><text x="215.2" y="268.90000000000003">N/A</text><text x="228.5" y="283.0">N/A</text><text x="215.4" y="298.90000000000003">96</text><text x="210.6" y="306.3">103</text><text x="225.4" y="304.90000000000003">35</text><text x="247.3" y="343.3">60</text></g>
</g>
</svg>

<!-- popup -->
<div class="a" style="left:269px;top:77px;width:120px;height:103px;background:#fff;border-radius:8px;box-shadow:0 1px 3px rgba(0,0,0,.25)"></div>
<div class="a" style="left:297px;top:179px;width:0;height:0;border-left:9px solid transparent;border-right:9px solid transparent;border-top:9px solid #fff"></div>
<div class="a" style="left:269px;top:88px;width:120px;text-align:center;font-size:10.5px;line-height:11.3px;color:#222">Bishkek<br>2022-12-12 6:00 PM<br>(LT)</div>
<div class="a" style="left:281px;top:123px;width:96px;height:46px;border:1px solid #0b3d6e;background:#fff">
 <div class="a" style="left:0;top:0;width:94px;height:21px;background:#034b85"></div>
 <div class="a" style="left:0;top:4px;width:61px;text-align:center;color:#fff;font-weight:700;font-size:10.4px">Pollutant</div>
 <div class="a" style="left:61px;top:4px;width:33px;text-align:center;color:#fff;font-weight:700;font-size:10.4px">AQI</div>
 <div class="a" style="left:61px;top:21px;width:33px;height:23px;background:#4a0026"></div>
 <div class="a" style="left:0;top:27px;width:61px;text-align:center;color:#333;font-size:10.1px">PM2.5</div>
 <div class="a" style="left:61px;top:27px;width:33px;text-align:center;color:#fff;font-weight:700;font-size:10.5px">424</div>
</div>

<!-- right column -->
<div class="a sh" style="top:4px">Select a City</div>
<div class="a sel" style="top:33px">Bishkek<span class="x">&#215;</span><span class="car"></span></div>
<div class="a sh" style="top:75px">Select a Parameter</div>
<div class="a sel" style="top:104px">PM2.5<span class="x">&#215;</span><span class="car"></span></div>
<div class="a box">
 <div class="a" style="left:8px;top:8px;font-weight:700;font-size:10.4px;color:#333">Bishkek</div>
 <div class="a" style="left:214px;top:19px;width:26px;height:26px;background:#f1b03a">
  <svg width="26" height="26" viewBox="0 0 26 26"><circle cx="5.9" cy="19.7" r="2.8" fill="#fff"/><path d="M3.5 12.8 A10 10 0 0 1 13.5 22.8" stroke="#fff" stroke-width="4" fill="none"/><path d="M3.5 5.6 A17.2 17.2 0 0 1 20.7 22.8" stroke="#fff" stroke-width="4.2" fill="none"/></svg>
 </div>
</div>
<div class="a note">Note: Values above 500 are considered Beyond the AQI. Follow<br>recommendations for the Hazardous category. Additional<br>information on reducing exposure to extremely high levels of particle<br>pollution is available <a>here</a>.</div>

<!-- tabs -->
<div class="a" style="left:10px;top:378px;width:795px;height:1px;background:#999"></div>
<div class="a tab" style="left:10px;width:81px;background:#fff;border:1px solid #aaa;border-top:2px solid #034b85;border-bottom:none;color:#222;line-height:24px;font-size:10px">AQI</div>
<div class="a tab" style="left:93px;width:125px;background:#d2d2d2;color:#777">Concentration</div>
<div class="a tab" style="left:220px;width:104px;background:#d2d2d2;color:#777">Historical</div>
<div class="a learn">Learn more about how the Air Quality Index [AQI] is calculated from the EPA <a>here</a>.</div>

<!-- chart -->
<div class="a" style="left:10px;top:417px;width:596px;height:245px;background:#fff"></div>
<svg class="a" style="left:0;top:0" width="830" height="662" viewBox="0 0 830 662" font-family="Liberation Sans">
<line x1="66" x2="599" y1="601.0" y2="601.0" stroke="#e6e6e6" stroke-width="1"/><text x="55.5" y="603.4" text-anchor="end" font-size="9" fill="#333">0</text><line x1="66" x2="599" y1="573.8" y2="573.8" stroke="#e6e6e6" stroke-width="1"/><text x="55.5" y="576.2" text-anchor="end" font-size="9" fill="#333">100</text><line x1="66" x2="599" y1="546.6" y2="546.6" stroke="#e6e6e6" stroke-width="1"/><text x="55.5" y="549.0" text-anchor="end" font-size="9" fill="#333">200</text><line x1="66" x2="599" y1="519.5" y2="519.5" stroke="#e6e6e6" stroke-width="1"/><text x="55.5" y="521.9" text-anchor="end" font-size="9" fill="#333">300</text><line x1="66" x2="599" y1="492.3" y2="492.3" stroke="#e6e6e6" stroke-width="1"/><text x="55.5" y="494.7" text-anchor="end" font-size="9" fill="#333">400</text><line x1="66" x2="599" y1="465.1" y2="465.1" stroke="#e6e6e6" stroke-width="1"/><text x="55.5" y="467.5" text-anchor="end" font-size="9" fill="#333">500</text><rect x="71.8" y="518.6" width="12.2" height="82.4" fill="#4a0026"/><rect x="94.0" y="516.2" width="12.2" height="84.8" fill="#4a0026"/><rect x="116.1" y="513.5" width="12.2" height="87.5" fill="#4a0026"/><rect x="138.3" y="497.2" width="12.2" height="103.8" fill="#4a0026"/><rect x="160.4" y="492.8" width="12.2" height="108.2" fill="#4a0026"/><rect x="182.6" y="491.2" width="12.2" height="109.8" fill="#4a0026"/><rect x="204.8" y="497.2" width="12.2" height="103.8" fill="#4a0026"/><rect x="226.9" y="497.2" width="12.2" height="103.8" fill="#4a0026"/><rect x="249.1" y="482.2" width="12.2" height="118.8" fill="#4a0026"/><rect x="271.2" y="487.7" width="12.2" height="113.3" fill="#4a0026"/><rect x="293.4" y="498.0" width="12.2" height="103.0" fill="#4a0026"/><rect x="315.6" y="501.2" width="12.2" height="99.8" fill="#4a0026"/><rect x="337.7" y="502.1" width="12.2" height="98.9" fill="#4a0026"/><rect x="359.9" y="501.2" width="12.2" height="99.8" fill="#4a0026"/><rect x="382.0" y="507.5" width="12.2" height="93.5" fill="#4a0026"/><rect x="404.2" y="507.5" width="12.2" height="93.5" fill="#4a0026"/><rect x="426.4" y="508.0" width="12.2" height="93.0" fill="#4a0026"/><rect x="448.5" y="506.1" width="12.2" height="94.9" fill="#4a0026"/><rect x="470.7" y="469.7" width="12.2" height="131.3" fill="#4a0026"/><rect x="492.8" y="468.9" width="12.2" height="132.1" fill="#4a0026"/><rect x="515.0" y="463.5" width="12.2" height="137.5" fill="#4a0026"/><rect x="537.2" y="466.5" width="12.2" height="134.5" fill="#4a0026"/><rect x="559.3" y="475.2" width="12.2" height="125.8" fill="#4a0026"/><rect x="581.5" y="485.8" width="12.2" height="115.2" fill="#4a0026"/><line x1="66" x2="599" y1="601.5" y2="601.5" stroke="#ccd6eb" stroke-width="1"/><line x1="66.4" x2="66.4" y1="601" y2="607" stroke="#ccd6eb" stroke-width="1"/><line x1="88.6" x2="88.6" y1="601" y2="607" stroke="#ccd6eb" stroke-width="1"/><line x1="110.7" x2="110.7" y1="601" y2="607" stroke="#ccd6eb" stroke-width="1"/><line x1="132.9" x2="132.9" y1="601" y2="607" stroke="#ccd6eb" stroke-width="1"/><line x1="155.0" x2="155.0" y1="601" y2="607" stroke="#ccd6eb" stroke-width="1"/><line x1="177.2" x2="177.2" y1="601" y2="607" stroke="#ccd6eb" stroke-width="1"/><line x1="199.4" x2="199.4" y1="601" y2="607" stroke="#ccd6eb" stroke-width="1"/><line x1="221.5" x2="221.5" y1="601" y2="607" stroke="#ccd6eb" stroke-width="1"/><line x1="243.7" x2="243.7" y1="601" y2="607" stroke="#ccd6eb" stroke-width="1"/><line x1="265.8" x2="265.8" y1="601" y2="607" stroke="#ccd6eb" stroke-width="1"/><line x1="288.0" x2="288.0" y1="601" y2="607" stroke="#ccd6eb" stroke-width="1"/><line x1="310.2" x2="310.2" y1="601" y2="607" stroke="#ccd6eb" stroke-width="1"/><line x1="332.3" x2="332.3" y1="601" y2="607" stroke="#ccd6eb" stroke-width="1"/><line x1="354.5" x2="354.5" y1="601" y2="607" stroke="#ccd6eb" stroke-width="1"/><line x1="376.6" x2="376.6" y1="601" y2="607" stroke="#ccd6eb" stroke-width="1"/><line x1="398.8" x2="398.8" y1="601" y2="607" stroke="#ccd6eb" stroke-width="1"/><line x1="421.0" x2="421.0" y1="601" y2="607" stroke="#ccd6eb" stroke-width="1"/><line x1="443.1" x2="443.1" y1="601" y2="607" stroke="#ccd6eb" stroke-width="1"/><line x1="465.3" x2="465.3" y1="601" y2="607" stroke="#ccd6eb" stroke-width="1"/><line x1="487.4" x2="487.4" y1="601" y2="607" stroke="#ccd6eb" stroke-width="1"/><line x1="509.6" x2="509.6" y1="601" y2="607" stroke="#ccd6eb" stroke-width="1"/><line x1="531.8" x2="531.8" y1="601" y2="607" stroke="#ccd6eb" stroke-width="1"/><line x1="553.9" x2="553.9" y1="601" y2="607" stroke="#ccd6eb" stroke-width="1"/><line x1="576.1" x2="576.1" y1="601" y2="607" stroke="#ccd6eb" stroke-width="1"/><line x1="598.2" x2="598.2" y1="601" y2="607" stroke="#ccd6eb" stroke-width="1"/><text transform="translate(80.1,611.8) rotate(-45)" text-anchor="end" font-size="9" letter-spacing="0.3" fill="#6a6a6a">7 PM</text><text transform="translate(102.3,611.8) rotate(-45)" text-anchor="end" font-size="9" letter-spacing="0.3" fill="#6a6a6a">8 PM</text><text transform="translate(124.4,611.8) rotate(-45)" text-anchor="end" font-size="9" letter-spacing="0.3" fill="#6a6a6a">9 PM</text><text transform="translate(146.6,611.8) rotate(-45)" text-anchor="end" font-size="9" letter-spacing="0.3" fill="#6a6a6a">10 PM</text><text transform="translate(168.7,611.8) rotate(-45)" text-anchor="end" font-size="9" letter-spacing="0.3" fill="#6a6a6a">11 PM</text><text transform="translate(190.9,611.8) rotate(-45)" text-anchor="end" font-size="9" letter-spacing="0.3" fill="#6a6a6a">Dec 12, 2022 12 AM</text><text transform="translate(213.1,611.8) rotate(-45)" text-anchor="end" font-size="9" letter-spacing="0.3" fill="#6a6a6a">1 AM</text><text transform="translate(235.2,611.8) rotate(-45)" text-anchor="end" font-size="9" letter-spacing="0.3" fill="#6a6a6a">2 AM</text><text transform="translate(257.4,611.8) rotate(-45)" text-anchor="end" font-size="9" letter-spacing="0.3" fill="#6a6a6a">3 AM</text><text transform="translate(279.5,611.8) rotate(-45)" text-anchor="end" font-size="9" letter-spacing="0.3" fill="#6a6a6a">4 AM</text><text transform="translate(301.7,611.8) rotate(-45)" text-anchor="end" font-size="9" letter-spacing="0.3" fill="#6a6a6a">5 AM</text><text transform="translate(323.9,611.8) rotate(-45)" text-anchor="end" font-size="9" letter-spacing="0.3" fill="#6a6a6a">6 AM</text><text transform="translate(346.0,611.8) rotate(-45)" text-anchor="end" font-size="9" letter-spacing="0.3" fill="#6a6a6a">7 AM</text><text transform="translate(368.2,611.8) rotate(-45)" text-anchor="end" font-size="9" letter-spacing="0.3" fill="#6a6a6a">8 AM</text><text transform="translate(390.3,611.8) rotate(-45)" text-anchor="end" font-size="9" letter-spacing="0.3" fill="#6a6a6a">9 AM</text><text transform="translate(412.5,611.8) rotate(-45)" text-anchor="end" font-size="9" letter-spacing="0.3" fill="#6a6a6a">10 AM</text><text transform="translate(434.7,611.8) rotate(-45)" text-anchor="end" font-size="9" letter-spacing="0.3" fill="#6a6a6a">11 AM</text><text transform="translate(456.8,611.8) rotate(-45)" text-anchor="end" font-size="9" letter-spacing="0.3" fill="#6a6a6a">12 PM</text><text transform="translate(479.0,611.8) rotate(-45)" text-anchor="end" font-size="9" letter-spacing="0.3" fill="#6a6a6a">1 PM</text><text transform="translate(501.1,611.8) rotate(-45)" text-anchor="end" font-size="9" letter-spacing="0.3" fill="#6a6a6a">2 PM</text><text transform="translate(523.3,611.8) rotate(-45)" text-anchor="end" font-size="9" letter-spacing="0.3" fill="#6a6a6a">3 PM</text><text transform="translate(545.5,611.8) rotate(-45)" text-anchor="end" font-size="9" letter-spacing="0.3" fill="#6a6a6a">4 PM</text><text transform="translate(567.6,611.8) rotate(-45)" text-anchor="end" font-size="9" letter-spacing="0.3" fill="#6a6a6a">5 PM</text><text transform="translate(589.8,611.8) rotate(-45)" text-anchor="end" font-size="9" letter-spacing="0.3" fill="#6a6a6a">6 PM</text><text transform="translate(33,529.5) rotate(-90)" text-anchor="middle" font-size="9" fill="#333">AQI</text><text x="308" y="434.4" text-anchor="middle" font-size="12.5" letter-spacing="0.9" fill="#333">Bishkek &#8211; PM2.5</text>
</svg>

<!-- current conditions -->
<div class="a panel">
 <div class="a" style="left:0;top:0;width:186px;height:56px;background:#034b85"></div>
 <div class="a" style="left:0;top:56px;width:186px;height:87px;background:#4a0026"></div>
 <div class="a" style="left:0;top:3px;width:186px;text-align:center;color:#fff;font-weight:700;font-size:11.2px;line-height:16px">Current Conditions</div>
 <div class="a" style="left:0;top:20px;width:186px;text-align:center;color:#fff;font-weight:700;font-size:9px;line-height:16px">observed at</div>
 <div class="a" style="left:0;top:35px;width:186px;text-align:center;color:#fff;font-weight:700;font-size:11.2px;line-height:16px">Dec 12, 2022 6:00 PM (LT)</div>
 <div class="a" style="left:0;top:66px;width:186px;text-align:center;color:#fff;font-weight:700;font-size:15px;line-height:21.7px">424 AQI<br>Hazardous<br>PM2.5</div>
 <div class="a" style="left:0;top:150px;width:186px;text-align:center;color:#333;font-weight:700;font-size:9px;line-height:12px">Health Message</div>
 <div class="a" style="left:4px;top:168px;width:182px;color:#333;font-size:9px;line-height:16px">AQI values over 300 trigger health warnings of emergency conditions. The entire population is even more likely to be affected by serious health effects.</div>
</div>
</body></html>
